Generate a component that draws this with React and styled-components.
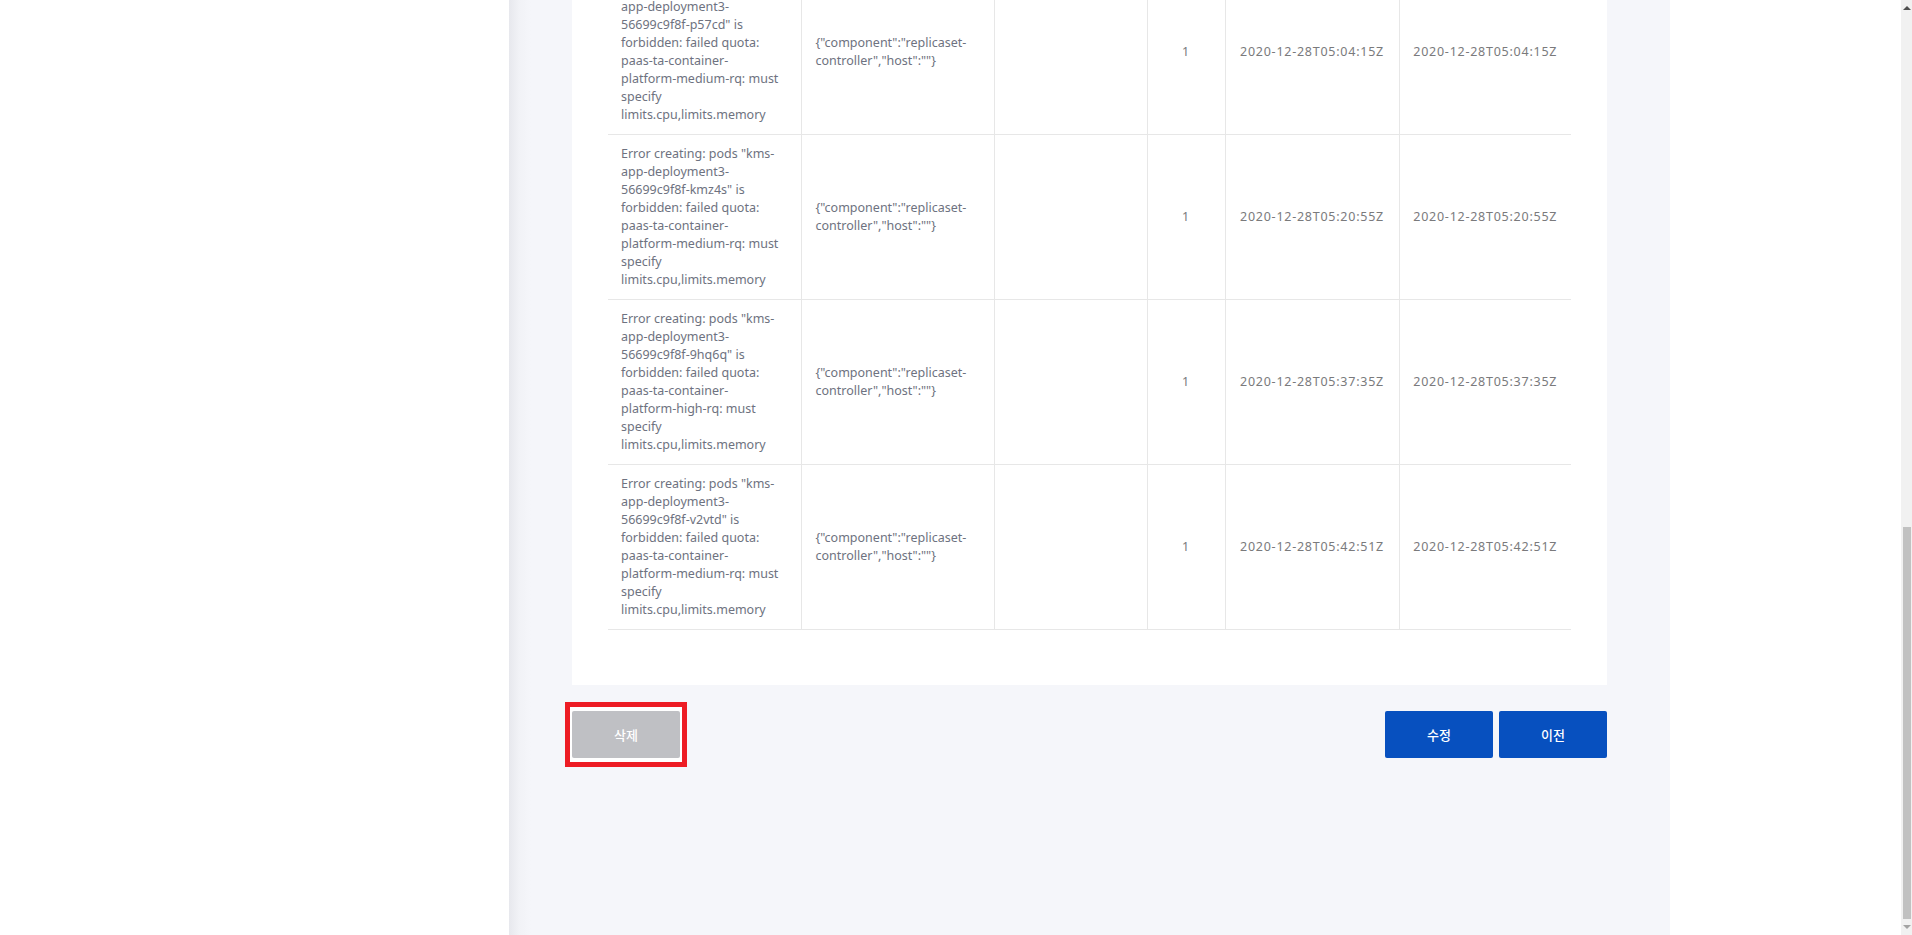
import React from "react";
import styled, { createGlobalStyle } from "styled-components";

const rows = [
  { pod: "p57cd", quota: "medium", time: "2020-12-28T05:04:15Z" },
  { pod: "kmz4s", quota: "medium", time: "2020-12-28T05:20:55Z" },
  { pod: "9hq6q", quota: "high", time: "2020-12-28T05:37:35Z" },
  { pod: "v2vtd", quota: "medium", time: "2020-12-28T05:42:51Z" },
];

export default function App() {
  return (
    <Page>
      <GlobalStyle />
      <Main>
        <SideBlank />
        <Content>
          <Card>
            <Table>
              <colgroup>
                <col style={{ width: 193 }} />
                <col style={{ width: 193 }} />
                <col style={{ width: 153 }} />
                <col style={{ width: 78 }} />
                <col style={{ width: 174 }} />
                <col style={{ width: 172 }} />
              </colgroup>
              <tbody>
                {rows.map((r) => (
                  <tr key={r.pod}>
                    <Cell $pad="10px 18px 10px 13px">
                      {`Error creating: pods "kms-app-deployment3-56699c9f8f-${r.pod}" is forbidden: failed quota: paas-ta-container-platform-${r.quota}-rq: must specify limits.cpu,limits.memory`}
                    </Cell>
                    <Cell $pad="10px 14px">{`{"component":"replicaset-controller","host":""}`}</Cell>
                    <Cell />
                    <Cell $date>1</Cell>
                    <Cell $date>{r.time}</Cell>
                    <Cell $date>{r.time}</Cell>
                  </tr>
                ))}
              </tbody>
            </Table>
          </Card>
          <Actions>
            <Highlight>
              <Button $gray>삭제</Button>
            </Highlight>
            <Group>
              <Button>수정</Button>
              <Button>이전</Button>
            </Group>
          </Actions>
        </Content>
        <SideBlank $fill />
      </Main>
      <Scrollbar>
        <Arrow />
        <Track>
          <Thumb />
        </Track>
        <Arrow $down />
      </Scrollbar>
    </Page>
  );
}

const GlobalStyle = createGlobalStyle`
  html, body {
    margin: 0;
    padding: 0;
    background: #fff;
    overflow: hidden;
  }
  body {
    font-family: "Noto Sans", "Noto Sans CJK KR", sans-serif;
  }
`;

const Page = styled.div`
  display: flex;
  height: 935px;
  overflow: hidden;
  background: #fff;
`;

const Main = styled.div`
  flex: 1;
  display: flex;
  min-width: 0;
`;

const SideBlank = styled.div`
  width: 509px;
  flex: ${(p) => (p.$fill ? 1 : "none")};
  background: #fff;
`;

const Content = styled.div`
  width: 1161px;
  flex: none;
  box-sizing: border-box;
  padding: 0 63px;
  background: linear-gradient(to right, #e7e8ed 0, #f1f2f6 10px, #f5f6fa 22px, #f5f6fa 100%);
`;

const Card = styled.div`
  background: #fff;
  margin-top: -30px;
  padding: 0 36px 55px;
`;

const Table = styled.table`
  width: 963px;
  table-layout: fixed;
  border-collapse: collapse;
  font-size: 12.5px;
  line-height: 18px;

  tr {
    border-bottom: 1px solid #e7e7e7;
  }
`;

const Cell = styled.td`
  padding: ${(p) => p.$pad || "10px 0"};
  vertical-align: middle;
  text-align: ${(p) => (p.$date ? "center" : "left")};
  color: ${(p) => (p.$date ? "#7a7a7c" : "#6e7280")};
  letter-spacing: ${(p) => (p.$date ? "0.75px" : "0")};
  white-space: ${(p) => (p.$date ? "nowrap" : "normal")};
  border-right: 1px solid #e7e7e7;
  word-wrap: break-word;

  &:last-child {
    border-right: none;
  }
`;

const Actions = styled.div`
  display: flex;
  justify-content: space-between;
  align-items: flex-start;
  margin-top: 26px;
`;

const Group = styled.div`
  display: flex;
  gap: 6px;
`;

const Highlight = styled.div`
  display: flex;
  margin: -9px -7px;
  padding: 4px 2px;
  border: 5px solid #ed1c24;
  background: #fff;
`;

const Button = styled.button`
  width: 108px;
  height: 47px;
  border: none;
  border-radius: 2px;
  background: ${(p) => (p.$gray ? "#bfc0c4" : "#0750bf")};
  color: #fff;
  font-family: "Noto Sans CJK KR", "Noto Sans", sans-serif;
  font-size: 13px;
  font-weight: 500;
  cursor: pointer;
`;

const Scrollbar = styled.div`
  width: 11px;
  flex: none;
  display: flex;
  flex-direction: column;
  background: #f1f1f1;
`;

const Track = styled.div`
  flex: 1;
  display: flex;
  flex-direction: column;
  justify-content: flex-end;
  padding: 0 1px 0 2px;
`;

const Thumb = styled.div`
  height: 392px;
  background: #c1c1c1;
`;

const Arrow = styled.div`
  height: 16px;
  display: flex;
  align-items: center;
  justify-content: center;

  &::before {
    content: "";
    border-left: 4px solid transparent;
    border-right: 4px solid transparent;
    ${(p) =>
      p.$down
        ? "border-top: 4px solid #a3a3a3;"
        : "border-bottom: 4px solid #505050;"}
  }
`;
